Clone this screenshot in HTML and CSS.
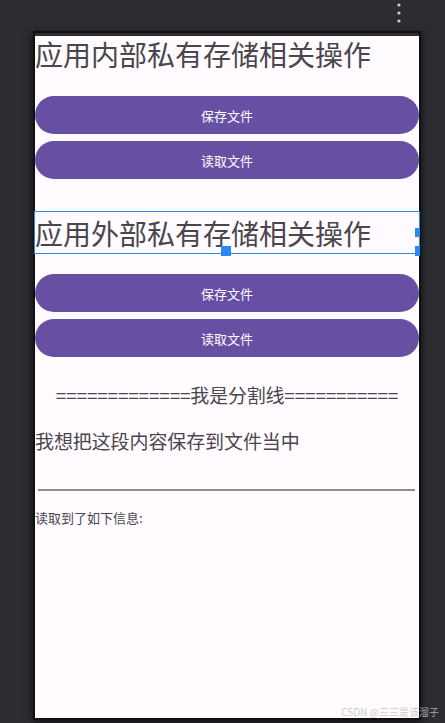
FILE: index.html
```html
<!DOCTYPE html>
<html lang="zh-CN">
<head>
  <meta charset="UTF-8" />
  <title>文件存储</title>
  <meta name="viewport" content="width=device-width, initial-scale=1.0" />
  <link rel="stylesheet" href="styles.css">
</head>

<body>

  <div class="toolbar">
    <svg class="more" width="6" height="22" viewBox="0 0 6 22">
      <circle cx="3" cy="3" r="1.6" fill="#cfd1d6" />
      <circle cx="3" cy="11" r="1.6" fill="#cfd1d6" />
      <circle cx="3" cy="19" r="1.6" fill="#cfd1d6" />
    </svg>
  </div>

  <div class="device">
    <div class="screen">
      <h1 class="title">应用内部私有存储相关操作</h1>
      <div class="btn-group">
        <button class="btn">保存文件</button>
        <button class="btn">读取文件</button>
      </div>

      <div class="title selected">
        应用外部私有存储相关操作
        <span class="handle handle-bottom"></span>
        <span class="handle handle-right-mid"></span>
        <span class="handle handle-right-bottom"></span>
      </div>
      <div class="btn-group second">
        <button class="btn">保存文件</button>
        <button class="btn">读取文件</button>
      </div>

      <p class="divider">=============我是分割线===========</p>
      <p class="content">我想把这段内容保存到文件当中</p>
      <div class="edit-line"></div>
      <p class="info">读取到了如下信息:</p>
    </div>
  </div>

  <div class="watermark">CSDN @三三是该溜子</div>

</body>
</html>
```

FILE: styles.css
```css
:root {
  --primary: #6750a4;
  --surface: #fffbfe;
  --text: #4a464e;
  --select: #2a8af2;
  --font: "Noto Sans CJK SC", "Noto Sans", sans-serif;
}
body {
  margin: 0;
  width: 445px;
  height: 723px;
  overflow: hidden;
  background: #2b2d31;
  font-family: var(--font);
  position: relative;
}
.toolbar {
  height: 31px;
  display: flex;
  justify-content: flex-end;
  align-items: flex-start;
  padding-right: 43px;
}
.more {
  margin-top: 2px;
}
.device {
  margin-left: 33px;
  width: 384px;
  border: 2px solid #0f1012;
  box-shadow: 0 2px 8px rgba(0, 0, 0, 0.7);
}
.screen {
  height: 682px;
  background: var(--surface);
  color: var(--text);
}
.title {
  margin: 3px 0 0;
  font-size: 28px;
  font-weight: normal;
  line-height: 36px;
  white-space: nowrap;
}
.btn-group {
  margin-top: 24px;
  display: flex;
  flex-direction: column;
  gap: 7px;
}
.btn-group.second {
  margin-top: 20px;
}
.btn {
  height: 38px;
  border: none;
  border-radius: 19px;
  background: var(--primary);
  color: #fff;
  font-family: var(--font);
  font-size: 13px;
  padding: 0;
}
.selected {
  position: relative;
  margin: 32px -1px 0;
  height: 39px;
  padding-top: 2px;
  line-height: 38px;
  border: 1px solid var(--select);
}
.handle {
  position: absolute;
  width: 10px;
  height: 10px;
  background: var(--select);
}
.handle-bottom {
  left: 186px;
  bottom: -3px;
}
.handle-right-mid {
  right: -1px;
  top: 16px;
  width: 5px;
  height: 9px;
}
.handle-right-bottom {
  right: -1px;
  bottom: -3px;
  width: 5px;
}
.divider {
  margin: 25px 0 0;
  font-size: 19px;
  line-height: 26px;
  letter-spacing: -0.2px;
  text-align: center;
}
.content {
  margin: 20px 0 0;
  font-size: 19px;
  line-height: 26px;
  letter-spacing: -0.1px;
}
.edit-line {
  margin: 35px 4px 0 3px;
  height: 2px;
  background: #8d8a90;
}
.info {
  margin: 18px 0 0;
  font-size: 13px;
  line-height: 18px;
}
.watermark {
  position: absolute;
  right: 6px;
  bottom: 4px;
  font-size: 10px;
  color: rgba(190, 190, 195, 0.85);
}
```
